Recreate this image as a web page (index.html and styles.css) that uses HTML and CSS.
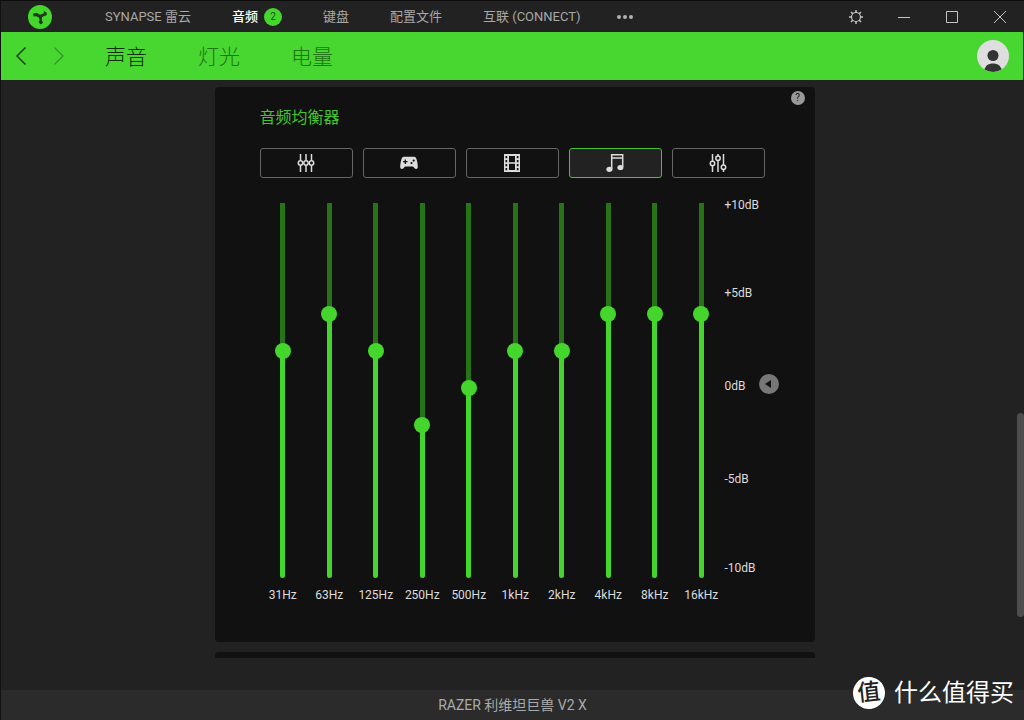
FILE: index.html
```html
<!DOCTYPE html>
<html lang="zh-CN">
<head>
<meta charset="utf-8">
<meta name="viewport" content="width=device-width, initial-scale=1">
<title>音频均衡器</title>
<link rel="stylesheet" href="styles.css">
</head>
<body>
<div class="app">
  <header class="titlebar">
    <svg class="logo" viewBox="0 0 24 24" aria-hidden="true">
      <circle cx="12" cy="12" r="12" fill="#44d62c"/>
      <path d="M5 8.500l4-.5 3 1.800 3.500-1.300.5-2.500 2.500 1.200.3 3-2.300.6-2.500 1.500-.2 3 1.200 2.400-2.200 1.800-2.200-2.200 1-2-.8-2.700-2.600-1.400-2.700.2z" fill="#1c3a18"/>
    </svg>
    <nav class="tabs">
      <a class="tab" href="#synapse">SYNAPSE 雷云</a>
      <a class="tab tab-active" href="#audio">音频<span class="badge">2</span></a>
      <a class="tab" href="#keyboard">键盘</a>
      <a class="tab" href="#profiles">配置文件</a>
      <a class="tab" href="#connect">互联 (CONNECT)</a>
      <button class="plain more" type="button" aria-label="更多">
        <svg width="16" height="4" viewBox="0 0 16 4" fill="#b0b0b0"><circle cx="2" cy="2" r="2"/><circle cx="8" cy="2" r="2"/><circle cx="14" cy="2" r="2"/></svg>
      </button>
    </nav>
    <div class="window-buttons">
      <button class="plain" type="button" aria-label="设置">
        <svg width="16" height="16" viewBox="0 0 16 16" fill="none" stroke="#c4c4c4"><circle cx="8" cy="8" r="4.500" stroke-width="1.200"/><path d="M8 3.500V1M8 15v-2.500M3.500 8H1M15 8h-2.500M4.800 4.800L3 3M13 13l-1.800-1.800M4.800 11.200L3 13M13 3l-1.800 1.800" stroke-width="1.500"/></svg>
      </button>
      <button class="plain" type="button" aria-label="最小化">
        <svg width="14" height="14" viewBox="0 0 14 14" stroke="#c4c4c4"><path d="M1 7.500h12"/></svg>
      </button>
      <button class="plain" type="button" aria-label="最大化">
        <svg width="14" height="14" viewBox="0 0 14 14" fill="none" stroke="#c4c4c4"><path d="M1.500 1.500h11v11h-11z"/></svg>
      </button>
      <button class="plain" type="button" aria-label="关闭">
        <svg width="14" height="14" viewBox="0 0 14 14" stroke="#c4c4c4"><path d="M1 1l12 12M13 1L1 13"/></svg>
      </button>
    </div>
  </header>

  <div class="subbar">
    <button class="plain arrow" type="button" aria-label="后退">
      <svg width="12" height="20" viewBox="0 0 12 20" fill="none" stroke="#17450f" stroke-width="1.500"><path d="M10.500 1.500L2 10l8.500 8.500"/></svg>
    </button>
    <button class="plain arrow" type="button" aria-label="前进">
      <svg width="12" height="20" viewBox="0 0 12 20" fill="none" stroke="#2f9620" stroke-width="1.200"><path d="M1.500 1.500L10 10l-8.500 8.500"/></svg>
    </button>
    <nav class="pages">
      <a class="page page-active" href="#sound">声音</a>
      <a class="page" href="#lighting">灯光</a>
      <a class="page" href="#power">电量</a>
    </nav>
    <button class="plain avatar" type="button" aria-label="账户">
      <svg width="32" height="32" viewBox="0 0 32 32"><circle cx="16" cy="16" r="16" fill="#dedede"/><circle cx="16" cy="15.500" r="5.500" fill="#333"/><path d="M7.500 29.500c1-4 4-6 8.500-6s7.500 2 8.500 6A16 16 0 0 1 16 32a16 16 0 0 1-8.500-2.500z" fill="#333"/></svg>
    </button>
  </div>

  <main class="content">
    <section class="card">
      <button class="plain help" type="button" aria-label="帮助">?</button>
      <h1 class="title">音频均衡器</h1>
      <div class="presets">
        <button class="preset" type="button" aria-label="默认">
          <svg width="20" height="20" viewBox="0 0 20 20" fill="none" stroke="#dcdcdc" stroke-width="1.500"><path d="M4.500 1v6.500M4.500 12.500V19M10 1v6.500M10 12.500V19M15.500 1v6.500M15.500 12.500V19"/><circle cx="4.500" cy="10" r="2.200"/><circle cx="10" cy="10" r="2.200"/><circle cx="15.500" cy="10" r="2.200"/></svg>
        </button>
        <button class="preset" type="button" aria-label="游戏">
          <svg width="20" height="20" viewBox="0 0 20 20"><path d="M5 3.800h10c1.500 0 2.200 1 2.700 3 .7 2.500 1.100 5 1.100 7 0 2.500-2 2.700-3.300 1.500L14 13.500H6l-1.500 1.800c-1.300 1.200-3.300 1-3.300-1.500 0-2 .4-4.500 1.100-7 .5-2 1.200-3 2.700-3z" fill="#dcdcdc"/><path d="M6.300 6.500v4.400M4.100 8.700h4.400" stroke="#111" stroke-width="1.300"/><circle cx="12.500" cy="10" r="1.100" fill="#111"/><circle cx="14.700" cy="7.600" r="1.100" fill="#111"/></svg>
        </button>
        <button class="preset" type="button" aria-label="电影">
          <svg width="20" height="20" viewBox="0 0 20 20"><path d="M2 1h16v18H2z" fill="#dcdcdc"/><path d="M7 3h6v14H7zM3.500 3h1.700v2.200H3.500zM3.500 7h1.700v2.200H3.500zM3.500 11h1.700v2.200H3.500zM3.500 15h1.700v2.200H3.500zM14.800 3h1.700v2.200h-1.700zM14.800 7h1.700v2.200h-1.700zM14.800 11h1.700v2.200h-1.700zM14.800 15h1.700v2.200h-1.700z" fill="#111"/><path d="M7 10h6" stroke="#dcdcdc" stroke-width="1.500"/></svg>
        </button>
        <button class="preset preset-active" type="button" aria-label="音乐" aria-pressed="true">
          <svg width="20" height="20" viewBox="0 0 20 20"><path d="M6.700 16V1.700h11V14M6.700 5h11" fill="none" stroke="#dcdcdc" stroke-width="1.500"/><ellipse cx="4.400" cy="16.300" rx="3" ry="2.600" fill="#dcdcdc"/><ellipse cx="15.400" cy="14.500" rx="3" ry="2.600" fill="#dcdcdc"/></svg>
        </button>
        <button class="preset" type="button" aria-label="自定义">
          <svg width="20" height="20" viewBox="0 0 20 20" fill="none" stroke="#dcdcdc" stroke-width="1.500"><path d="M4.500 1v7.300M4.500 12.700V19M10 1v2M10 7.500V19M15.500 1v11M15.500 16.500V19"/><circle cx="4.500" cy="10.500" r="2.200"/><circle cx="10" cy="5.200" r="2.200"/><circle cx="15.500" cy="14.200" r="2.200"/></svg>
        </button>
      </div>

      <div class="equalizer">
        <div class="bands">
          <div class="band"><div class="slider" style="--db:2"><span class="rail"></span><input class="range" id="b1" type="range" min="-10" max="10" value="2"></div><label for="b1">31Hz</label></div>
          <div class="band"><div class="slider" style="--db:4"><span class="rail"></span><input class="range" id="b2" type="range" min="-10" max="10" value="4"></div><label for="b2">63Hz</label></div>
          <div class="band"><div class="slider" style="--db:2"><span class="rail"></span><input class="range" id="b3" type="range" min="-10" max="10" value="2"></div><label for="b3">125Hz</label></div>
          <div class="band"><div class="slider" style="--db:-2"><span class="rail"></span><input class="range" id="b4" type="range" min="-10" max="10" value="-2"></div><label for="b4">250Hz</label></div>
          <div class="band"><div class="slider" style="--db:0"><span class="rail"></span><input class="range" id="b5" type="range" min="-10" max="10" value="0"></div><label for="b5">500Hz</label></div>
          <div class="band"><div class="slider" style="--db:2"><span class="rail"></span><input class="range" id="b6" type="range" min="-10" max="10" value="2"></div><label for="b6">1kHz</label></div>
          <div class="band"><div class="slider" style="--db:2"><span class="rail"></span><input class="range" id="b7" type="range" min="-10" max="10" value="2"></div><label for="b7">2kHz</label></div>
          <div class="band"><div class="slider" style="--db:4"><span class="rail"></span><input class="range" id="b8" type="range" min="-10" max="10" value="4"></div><label for="b8">4kHz</label></div>
          <div class="band"><div class="slider" style="--db:4"><span class="rail"></span><input class="range" id="b9" type="range" min="-10" max="10" value="4"></div><label for="b9">8kHz</label></div>
          <div class="band"><div class="slider" style="--db:4"><span class="rail"></span><input class="range" id="b10" type="range" min="-10" max="10" value="4"></div><label for="b10">16kHz</label></div>
        </div>
        <div class="scale">
          <span>+10dB</span>
          <span>+5dB</span>
          <div class="zero"><span>0dB</span>
            <button class="plain reset" type="button" aria-label="重置"><svg width="20" height="20" viewBox="0 0 20 20"><circle cx="10" cy="10" r="10" fill="#777"/><path d="M12 6v8l-6-4z" fill="#111"/></svg></button>
          </div>
          <span>-5dB</span>
          <span>-10dB</span>
        </div>
      </div>
    </section>
    <section class="card-next"></section>
    <div class="scroll-thumb"></div>
  </main>

  <footer class="footer">RAZER 利维坦巨兽 V2 X</footer>
  <div class="watermark"><span class="seal">值</span><span>什么值得买</span></div>
</div>
</body>
</html>
```
FILE: styles.css
```css
* { box-sizing: border-box; }

body {
  margin: 0;
  background: #222;
  color: #dcdcdc;
  font: 12px/16px Roboto, "Noto Sans CJK SC", sans-serif;
}

a { color: inherit; text-decoration: none; }

.plain {
  display: flex;
  align-items: center;
  justify-content: center;
  padding: 0;
  border: 0;
  background: none;
  color: inherit;
  font: inherit;
}

.app {
  position: relative;
  display: flex;
  flex-direction: column;
  min-height: 100vh;
  border-left: 1px solid #111;
}

.titlebar {
  display: flex;
  align-items: center;
  height: 32px;
  padding-left: 27px;
  border-top: 1px solid #0c0c0c;
}

.logo { width: 24px; height: 24px; }

.tabs {
  display: flex;
  align-items: center;
  gap: 41px;
  margin-left: 53px;
  color: #a8a8a8;
  font-size: 13px;
  white-space: nowrap;
}

.tab { display: flex; align-items: center; gap: 6px; }
.tab-active { color: #fff; font-weight: 500; }

.badge {
  width: 18px;
  border-radius: 9px;
  background: #44d62c;
  color: #174d10;
  font-size: 10px;
  font-weight: 400;
  line-height: 18px;
  text-align: center;
}

.more { margin-left: -5px; }

.window-buttons { display: flex; margin-left: auto; }
.window-buttons .plain { width: 48px; height: 31px; }

.subbar {
  display: flex;
  align-items: center;
  height: 48px;
  margin-right: 1px;
  padding: 0 14px 0 13px;
  background: #48d630;
}

.arrow { width: 14px; margin-right: 24px; }

.pages {
  display: flex;
  gap: 51px;
  margin-left: 15px;
  padding-top: 2px;
  color: #1f7414;
  font-size: 21px;
  font-weight: 300;
  line-height: 32px;
}

.page-active { color: #0d300a; }
.avatar { margin-left: auto; }

.content {
  position: relative;
  flex: 1;
  padding: 7px 16px 31px 20px;
}

.card {
  position: relative;
  max-width: 600px;
  margin: 0 auto 10px;
  padding: 19px 36px 39px 45px;
  border-radius: 4px;
  background: #111;
}

.card-next {
  max-width: 600px;
  height: 6px;
  margin: 0 auto;
  border-radius: 4px 4px 0 0;
  background: #111;
}

.help {
  position: absolute;
  top: 4px;
  right: 10px;
  width: 14px;
  height: 14px;
  border-radius: 7px;
  background: #999;
  color: #111;
  font-size: 10px;
}

.title {
  margin: 0 0 18px;
  color: #44c62f;
  font-size: 16px;
  font-weight: 400;
  line-height: 24px;
}

.presets {
  display: grid;
  grid-template-columns: repeat(5, 1fr);
  gap: 10px;
  margin-right: 14px;
}

.preset {
  display: flex;
  align-items: center;
  justify-content: center;
  height: 30px;
  padding: 0;
  border: 1px solid #666;
  border-radius: 3px;
  background: #111;
}

.preset-active { border-color: #44c62f; background: #222; }

.equalizer { display: flex; margin-top: 17px; }

.bands { display: grid; grid-template-columns: repeat(10, 1fr); flex: 1; }

.band { display: flex; flex-direction: column; align-items: center; gap: 6px; min-width: 0; }

.slider { display: grid; grid-template-rows: 386px; justify-items: center; }
.rail, .range { grid-area: 1 / 1; }

.rail {
  width: 5px;
  margin: 8px 0 3px;
  border-radius: 0 0 3px 3px;
  background: linear-gradient(to top, #44d62c calc(190px + var(--db) * 18px), #267318 0);
}

.range {
  width: 16px;
  height: 386px;
  margin: 0;
  appearance: none;
  background: none;
  writing-mode: vertical-lr;
  direction: rtl;
}

.range::-webkit-slider-thumb {
  width: 16px;
  height: 16px;
  border-radius: 8px;
  appearance: none;
  background: #44d62c;
}

.scale {
  display: grid;
  grid-template-rows: 88px 93px 93px 89px 16px;
  align-items: start;
  width: 54px;
  padding-top: 2px;
}

.zero { display: flex; align-items: flex-start; justify-content: space-between; height: 16px; }
.zero .reset { margin-top: -4px; }

.scroll-thumb {
  position: absolute;
  top: 333px;
  right: 0;
  width: 7px;
  height: 204px;
  border-radius: 4px;
  background: #4d4d4d;
}

.footer {
  height: 30px;
  background: #2b2b2b;
  color: #aaa;
  font-size: 14px;
  line-height: 30px;
  text-align: center;
}

.watermark {
  position: absolute;
  right: 10px;
  bottom: 11px;
  display: flex;
  align-items: center;
  gap: 9px;
  color: #fff;
  font-size: 24px;
  line-height: 32px;
}

.seal {
  width: 32px;
  border-radius: 16px;
  background: #fff;
  color: #222;
  font-size: 23px;
  font-weight: 500;
  text-align: center;
  transform: rotate(-6deg);
}
```
